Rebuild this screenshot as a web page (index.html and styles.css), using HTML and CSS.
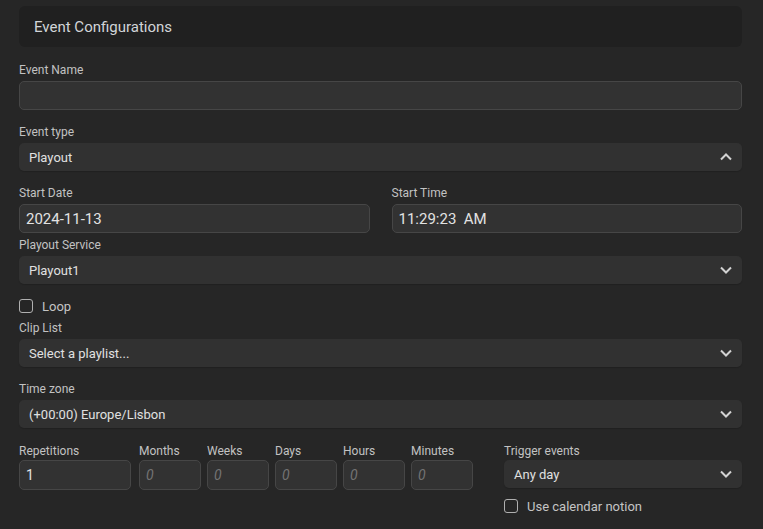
FILE: index.html
```html
<!DOCTYPE html>
<html lang="en">
<head>
<meta charset="utf-8">
<title>Event Configurations</title>
<link rel="stylesheet" href="styles.css">
</head>
<body>
<div class="page">
  <div class="header">Event Configurations</div>

  <div class="field">
    <label class="label">Event Name</label>
    <div class="input"></div>
  </div>

  <div class="field">
    <label class="label">Event type</label>
    <div class="select"><span>Playout</span>
      <svg class="chev" width="12" height="8" viewBox="0 0 12 8"><path d="M1 6.5 L6 1.5 L11 6.5" fill="none" stroke="#d2d2d2" stroke-width="2"/></svg>
    </div>
  </div>

  <div class="field row2">
    <div class="col">
      <label class="label">Start Date</label>
      <div class="input big">2024-11-13</div>
    </div>
    <div class="col">
      <label class="label">Start Time</label>
      <div class="input big">11:29:23&nbsp; AM</div>
    </div>
  </div>

  <div class="field tight">
    <label class="label">Playout Service</label>
    <div class="select"><span>Playout1</span>
      <svg class="chev" width="12" height="8" viewBox="0 0 12 8"><path d="M1 1.5 L6 6.5 L11 1.5" fill="none" stroke="#d2d2d2" stroke-width="2"/></svg>
    </div>
  </div>

  <div class="check loop"><span class="box"></span><span>Loop</span></div>

  <div class="field tight">
    <label class="label">Clip List</label>
    <div class="select"><span>Select a playlist...</span>
      <svg class="chev" width="12" height="8" viewBox="0 0 12 8"><path d="M1 1.5 L6 6.5 L11 1.5" fill="none" stroke="#d2d2d2" stroke-width="2"/></svg>
    </div>
  </div>

  <div class="field">
    <label class="label">Time zone</label>
    <div class="select"><span>(+00:00) Europe/Lisbon</span>
      <svg class="chev" width="12" height="8" viewBox="0 0 12 8"><path d="M1 1.5 L6 6.5 L11 1.5" fill="none" stroke="#d2d2d2" stroke-width="2"/></svg>
    </div>
  </div>

  <div class="field reprow">
    <div class="rcol rep">
      <label class="label small">Repetitions</label>
      <div class="input num">1</div>
    </div>
    <div class="units">
      <div class="rcol unit">
        <label class="label small">Months</label>
        <div class="input num ph">0</div>
      </div>
      <div class="rcol unit">
        <label class="label small">Weeks</label>
        <div class="input num ph">0</div>
      </div>
      <div class="rcol unit">
        <label class="label small">Days</label>
        <div class="input num ph">0</div>
      </div>
      <div class="rcol unit">
        <label class="label small">Hours</label>
        <div class="input num ph">0</div>
      </div>
      <div class="rcol unit">
        <label class="label small">Minutes</label>
        <div class="input num ph">0</div>
      </div>
    </div>
    <div class="rcol trigger">
      <label class="label small">Trigger events</label>
      <div class="select"><span>Any day</span>
        <svg class="chev" width="12" height="8" viewBox="0 0 12 8"><path d="M1 1.5 L6 6.5 L11 1.5" fill="none" stroke="#d2d2d2" stroke-width="2"/></svg>
      </div>
      <div class="check cal"><span class="box"></span><span>Use calendar notion</span></div>
    </div>
  </div>
</div>
</body>
</html>
```

FILE: styles.css
```css
* { box-sizing: border-box; }
html, body { margin: 0; padding: 0; }
body {
  background: #262626;
  font-family: Roboto, "Liberation Sans", sans-serif;
  color: #dcdcdc;
  width: 763px;
  height: 529px;
  overflow: hidden;
}
.page {
  padding: 6px 21px 0 19px;
}
.header {
  height: 41px;
  background: #202020;
  border-radius: 6px;
  padding-left: 15px;
  display: flex;
  align-items: center;
  font-size: 15px;
  color: #d2d5d8;
}
.field { margin-top: 14px; }
.header + .field { margin-top: 15px; }
.field.tight { margin-top: 4px; }
.label {
  display: block;
  font-size: 12px;
  line-height: 16px;
  margin-bottom: 3px;
  color: #c2c2c2;
}
.label.small { margin-bottom: 1px; }
.input {
  height: 29px;
  background: #323232;
  border: 1px solid #464646;
  border-radius: 5px;
  padding: 0 6px;
  display: flex;
  align-items: center;
  font-size: 14px;
  color: #e2e2e2;
}
.input.big { font-size: 15px; }
.select {
  height: 28px;
  background: #313131;
  border-radius: 5px;
  padding: 0 10px;
  display: flex;
  align-items: center;
  justify-content: space-between;
  font-size: 13px;
  color: #e0e0e0;
  box-shadow: 0 1px 1px rgba(0,0,0,0.15);
}
.chev { display: block; }
.row2 {
  display: flex;
  gap: 22px;
}
.row2 .col { flex: 1; }
.check {
  display: flex;
  align-items: center;
  gap: 9px;
  height: 20px;
  font-size: 13px;
  color: #c4c4c4;
}
.check.loop { margin-top: 12px; }
.box {
  width: 14px;
  height: 14px;
  border: 1.5px solid #b0b0b0;
  border-radius: 3px;
  flex: none;
}
.reprow {
  display: flex;
  margin-top: 15px;
}
.rep { width: 112px; margin-right: 8px; }
.units { display: flex; gap: 6px; }
.unit { width: 62px; }
.num { height: 30px; }
.ph { color: #747474; font-style: italic; }
.trigger { width: 238px; margin-left: auto; }
.check.cal { margin-top: 8px; }
```
